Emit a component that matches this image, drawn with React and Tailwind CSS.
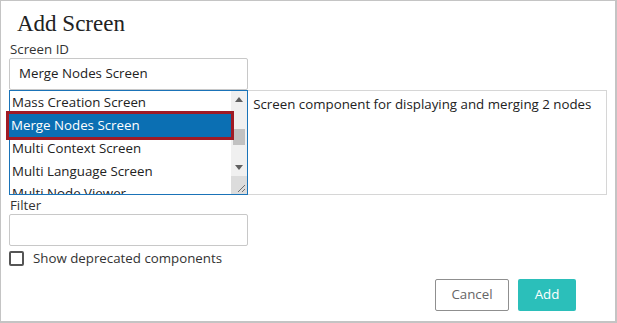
import React from 'react';

const items = [
    'Mass Creation Screen',
    'Merge Nodes Screen',
    'Multi Context Screen',
    'Multi Language Screen',
];

export default function App() {
    return (
        <div
            className="w-[617px] h-[323px] bg-white border border-r-2 border-b-2 border-[#c4c4c4] text-[#333] text-[13.3px] flex flex-col"
            style={{ fontFamily: '"Open Sans", sans-serif' }}
        >
            {/* Title */}
            <div
                className="pl-[16px] pt-[10px] h-[38px] text-[23px] leading-[26px] text-[#222]"
                style={{ fontFamily: '"Liberation Serif", serif' }}
            >
                Add Screen
            </div>

            <div className="px-[8px] flex flex-col">
                <label className="pl-[1px] h-[19px] leading-[20px]">Screen ID</label>
                <div className="w-[239px] h-[32px] border border-[#c8c8c8] rounded-[2px] flex items-center px-[9px] text-[#222]">
                    Merge Nodes Screen
                </div>

                {/* List + description */}
                <div className="flex">
                    <div className="relative w-[240px] h-[105px] border border-[#1a73b8] flex">
                        <div className="flex-1 flex flex-col">
                            {items.map((item, i) => (
                                <div
                                    key={item}
                                    className={`h-[23px] flex items-center pl-[2px] shrink-0 ${
                                        i === 1
                                            ? 'bg-[#0b6fb3] text-white outline-[3px] outline-solid outline-[#a01b25] relative -ml-px'
                                            : 'text-[#222]'
                                    }`}
                                >
                                    {item}
                                </div>
                            ))}
                            <div className="h-[11px] overflow-hidden text-[#222] pl-[2px] leading-[20px]">
                                Multi Node Viewer
                            </div>
                        </div>
                        {/* Scrollbar */}
                        <div className="w-[16px] bg-[#f0f0f0] flex flex-col">
                            <div className="h-[16px] flex items-center justify-center">
                                <svg width="8" height="5" viewBox="0 0 8 5"><path d="M0 5 L4 0 L8 5 Z" fill="#606060" /></svg>
                            </div>
                            <div className="h-[22px]" />
                            <div className="h-[16px] mx-[2px] bg-[#c1c1c1]" />
                            <div className="h-[14px]" />
                            <div className="h-[16px] flex items-center justify-center">
                                <svg width="8" height="5" viewBox="0 0 8 5"><path d="M0 0 L8 0 L4 5 Z" fill="#606060" /></svg>
                            </div>
                            <div className="flex-1" />
                            <div className="h-[18px] bg-[#dcdcdc] flex items-end justify-end pr-[1px] pb-[1px]">
                                <svg width="10" height="10" viewBox="0 0 10 10">
                                    <path d="M9 2 L2 9 M9 6 L6 9" stroke="#707070" strokeWidth="1" />
                                </svg>
                            </div>
                        </div>
                    </div>
                    <div className="w-[361px] h-[105px] -ml-px border border-[#d6d6d6] px-[5px] pt-[4px] leading-[18px] text-[#222]">
                        Screen component for displaying and merging 2 nodes
                    </div>
                </div>

                <label className="pl-[1px] h-[19px] leading-[20px]">Filter</label>
                <div className="w-[239px] h-[32px] border border-[#c8c8c8] rounded-[2px]" />

                <div className="flex items-center mt-[5px] h-[15px] leading-[15px]">
                    <div className="w-[15px] h-[15px] border-2 border-[#555] rounded-[2px] bg-white" />
                    <span className="ml-[9px] text-[#333]">Show deprecated components</span>
                </div>
            </div>

            <div className="flex justify-end gap-[9px] pr-[39px] mt-[13px]">
                <button className="w-[74px] h-[32px] border border-[#8f8f8f] rounded-[2px] text-[#666] bg-white">
                    Cancel
                </button>
                <button className="w-[58px] h-[32px] rounded-[2px] bg-[#2bbfba] text-white">
                    Add
                </button>
            </div>
        </div>
    );
}
